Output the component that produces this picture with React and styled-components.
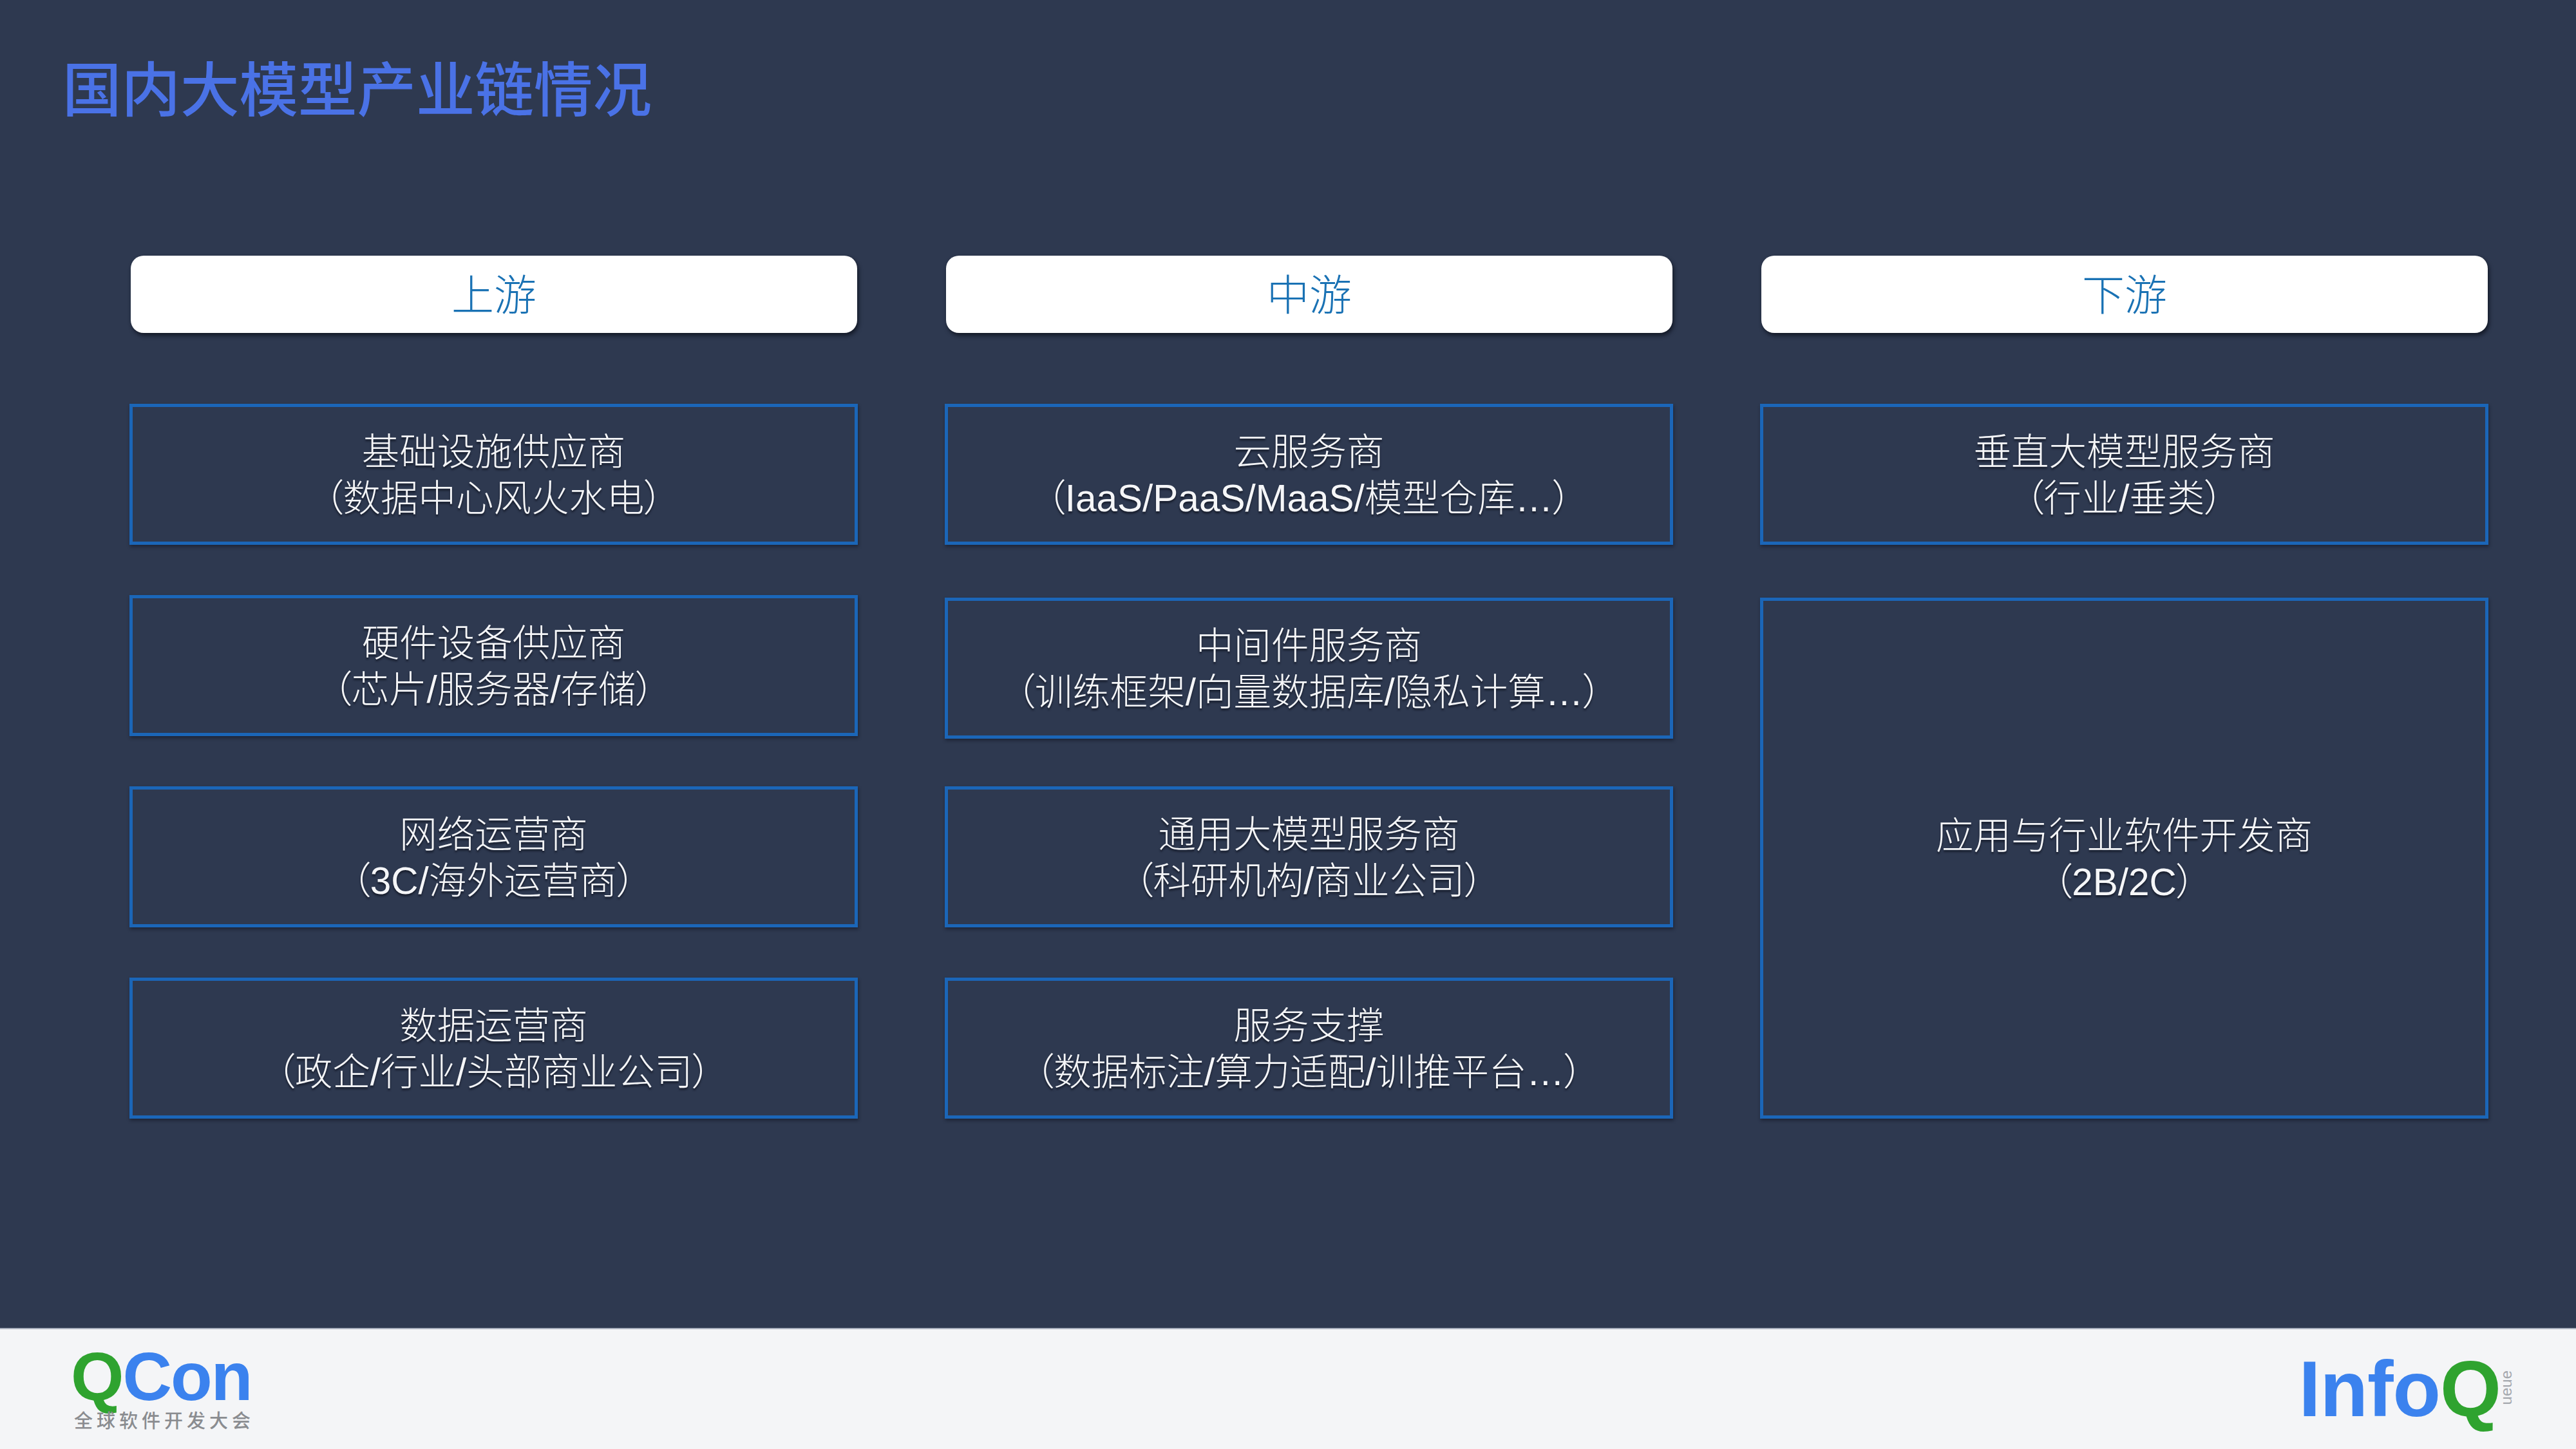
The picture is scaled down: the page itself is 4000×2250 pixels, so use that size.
import React from 'react';
import styled, { createGlobalStyle } from 'styled-components';

const GlobalStyle = createGlobalStyle`
  html, body {
    margin: 0;
    padding: 0;
    background: #2e3950;
  }
`;

const cellFont = `"Liberation Sans", "Noto Sans CJK SC", sans-serif`;

const Slide = styled.div`
  width: 4000px;
  height: 2250px;
  display: flex;
  flex-direction: column;
  background: #2e3950;
  overflow: hidden;
`;

const Main = styled.main`
  flex: 1;
  padding: 82px 0 0 97px;
`;

const Title = styled.h1`
  margin: 0 0 213px;
  height: 102px;
  font-family: "Noto Sans CJK SC", sans-serif;
  font-size: 91.5px;
  line-height: 102px;
  font-weight: 500;
  color: #4a72e6;
`;

const Board = styled.section`
  margin-left: 104px;
  display: grid;
  grid-template-columns: repeat(3, 1131px);
  grid-template-rows: 152px repeat(4, 219px);
  column-gap: 135px;
  row-gap: 78px;
`;

const ColumnHeader = styled.div`
  display: flex;
  align-items: center;
  justify-content: center;
  align-self: start;
  box-sizing: border-box;
  margin: 0 1px 0 2px;
  height: 120px;
  padding-bottom: 8px;
  background: #ffffff;
  border-radius: 20px;
  box-shadow: 2px 4px 6px rgba(10, 14, 24, 0.75);
  font-family: ${cellFont};
  font-size: 66px;
  font-weight: 300;
  color: #1a72b4;
`;

const Cell = styled.div`
  box-sizing: border-box;
  grid-column: ${(p) => p.$col};
  grid-row: ${(p) => p.$row};
  margin-top: ${(p) => p.$shift || 0}px;
  margin-bottom: ${(p) => -(p.$overhang || 0)}px;
  padding-top: 3px;
  display: flex;
  flex-direction: column;
  align-items: center;
  justify-content: center;
  border: 5px solid #1b66b8;
  box-shadow: 1px 3px 5px rgba(10, 14, 24, 0.45);
  font-family: ${cellFont};
  font-size: 58.5px;
  line-height: 72px;
  font-weight: 300;
  color: #f5f6f8;
  text-shadow: 0 3px 3px rgba(10, 14, 24, 0.65);
  font-feature-settings: "palt";
`;

const Footer = styled.footer`
  height: 188px;
  flex: none;
  display: flex;
  align-items: flex-start;
  justify-content: space-between;
  padding: 0 100px 0 110px;
  background: #f4f5f7;
  border-top: 2px solid #a9b0bd;
  box-sizing: border-box;
`;

const QConLogo = styled.div`
  display: flex;
  flex-direction: column;
  padding-top: 23px;
`;

const QConMark = styled.div`
  font-family: "Liberation Sans", sans-serif;
  font-weight: 700;
  font-size: 106px;
  line-height: 100px;
  letter-spacing: -2px;
  color: #3b82ee;
`;

const Green = styled.span`
  color: #2fa32f;
`;

const QConTag = styled.div`
  margin-left: 5px;
  font-family: "Noto Sans CJK SC", sans-serif;
  font-size: 29px;
  line-height: 34px;
  letter-spacing: 6px;
  font-weight: 500;
  color: #8a8c90;
`;

const InfoQLogo = styled.div`
  display: flex;
  align-items: flex-start;
  padding-top: 32px;
`;

const InfoQMark = styled.div`
  font-family: "Liberation Sans", sans-serif;
  font-weight: 700;
  font-size: 122px;
  line-height: 122px;
  letter-spacing: -1px;
  color: #3b82ee;
`;

const Queue = styled.span`
  margin: 32px 0 0 1px;
  writing-mode: vertical-rl;
  transform: rotate(180deg);
  font-family: "Liberation Sans", sans-serif;
  font-size: 24px;
  line-height: 16px;
  color: #a4a8ae;
`;

const headers = ['上游', '中游', '下游'];

const cells = [
  { col: 1, row: 2, lines: ['基础设施供应商', '（数据中心风火水电）'] },
  { col: 1, row: 3, lines: ['硬件设备供应商', '（芯片/服务器/存储）'] },
  { col: 1, row: 4, lines: ['网络运营商', '（3C/海外运营商）'] },
  { col: 1, row: 5, lines: ['数据运营商', '（政企/行业/头部商业公司）'] },
  { col: 2, row: 2, lines: ['云服务商', '（IaaS/PaaS/MaaS/模型仓库…）'] },
  { col: 2, row: 3, shift: 4, overhang: 4, lines: ['中间件服务商', '（训练框架/向量数据库/隐私计算…）'] },
  { col: 2, row: 4, lines: ['通用大模型服务商', '（科研机构/商业公司）'] },
  { col: 2, row: 5, lines: ['服务支撑', '（数据标注/算力适配/训推平台…）'] },
  { col: 3, row: 2, lines: ['垂直大模型服务商', '（行业/垂类）'] },
  { col: 3, row: '3 / 6', shift: 4, lines: ['应用与行业软件开发商', '（2B/2C）'] },
];

const App = () => (
  <Slide>
    <GlobalStyle />
    <Main>
      <Title>国内大模型产业链情况</Title>
      <Board>
        {headers.map((h) => (
          <ColumnHeader key={h}>{h}</ColumnHeader>
        ))}
        {cells.map((c) => (
          <Cell key={c.lines[0]} $col={c.col} $row={c.row} $shift={c.shift} $overhang={c.overhang}>
            {c.lines.map((line) => (
              <div key={line}>{line}</div>
            ))}
          </Cell>
        ))}
      </Board>
    </Main>
    <Footer>
      <QConLogo>
        <QConMark>
          <Green>Q</Green>Con
        </QConMark>
        <QConTag>全球软件开发大会</QConTag>
      </QConLogo>
      <InfoQLogo>
        <InfoQMark>
          Info<Green>Q</Green>
        </InfoQMark>
        <Queue>ueue</Queue>
      </InfoQLogo>
    </Footer>
  </Slide>
);

export default App;
